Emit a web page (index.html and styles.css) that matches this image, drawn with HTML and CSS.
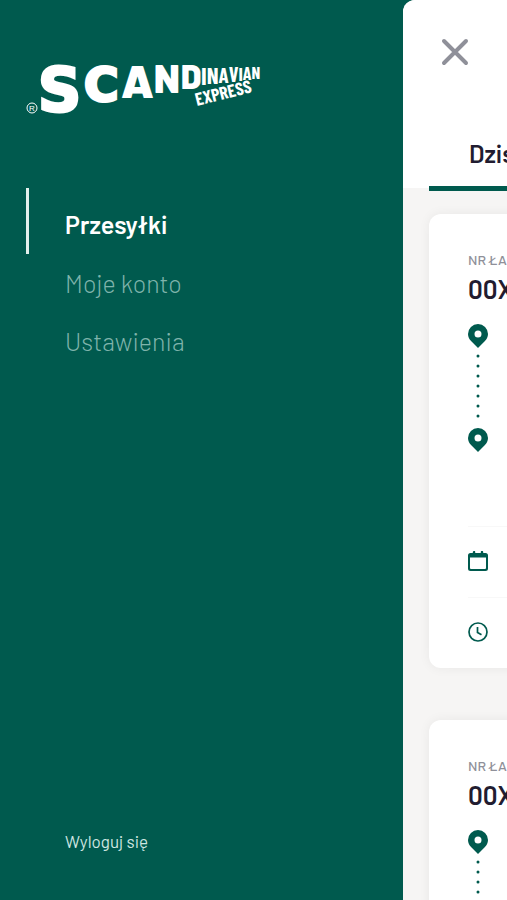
FILE: index.html
```html
<!DOCTYPE html>
<html lang="pl">
<head>
    <meta charset="UTF-8">
    <meta name="viewport" content="width=device-width, initial-scale=1.0">
    <title>Scandinavian Express</title>
    <link rel="stylesheet" href="styles.css">
</head>
<body>
    <!-- Shared icons -->
    <svg class="sprite" aria-hidden="true">
        <symbol id="pin" viewBox="0 0 20 24">
            <path fill-rule="evenodd" d="M10 0a10 10 0 0 1 10 10c0 3-1.300 5.300-3.300 7.300L10 24l-6.700-6.700C1.300 15.300 0 13 0 10A10 10 0 0 1 10 0zm0 6.500a3.500 3.500 0 1 0 0 7 3.500 3.500 0 0 0 0-7z"/>
        </symbol>
        <symbol id="calendar" viewBox="0 0 20 20">
            <path fill-rule="evenodd" d="M6 0a1 1 0 0 1 1.200 1v1h5.600V1a1.200 1.200 0 0 1 2.400 0v1h2.300A2.500 2.500 0 0 1 20 4.500v13a2.500 2.500 0 0 1-2.500 2.500h-15A2.500 2.500 0 0 1 0 17.500v-13A2.500 2.500 0 0 1 2.500 2h2.300V1A1.200 1.200 0 0 1 6 0zM2 6.500V17a1 1 0 0 0 1 1h14a1 1 0 0 0 1-1V6.500z"/>
        </symbol>
        <symbol id="clock" viewBox="0 0 20 20">
            <g fill="none" stroke="currentColor" stroke-width="1.700">
                <circle cx="10" cy="10" r="9"/>
                <path d="M9.500 5v5.500l4 2.300"/>
            </g>
        </symbol>
    </svg>

    <div class="app">
        <aside class="menu">
            <svg class="logo" viewBox="0 0 232 52" role="img" aria-label="Scandinavian Express">
                <text class="logo-wide" x="12" y="47" font-size="60">S</text>
                <text class="logo-wide" x="58" y="37" font-size="47">C</text>
                <text class="logo-black" x="95" y="34" font-size="46">A</text>
                <text class="logo-black" x="128" y="29" font-size="39">N</text>
                <text class="logo-black" x="155" y="25" font-size="33">D</text>
                <text class="logo-narrow" x="175" y="21">
                    <tspan font-size="25">I</tspan><tspan dy="-1" font-size="23">N</tspan><tspan dy="-1" font-size="21">A</tspan><tspan dy="-1" font-size="20">V</tspan><tspan dy="-1" font-size="19">I</tspan><tspan dy="-1" font-size="18">A</tspan><tspan dy="-1" font-size="17">N</tspan>
                </text>
                <text class="logo-narrow" font-size="18" transform="translate(171 42) rotate(-14)">EXPRESS</text>
                <circle cx="6" cy="44" r="5" fill="none" stroke="#fff"/>
                <text class="logo-mark" x="6" y="47" font-size="8" text-anchor="middle">R</text>
            </svg>

            <nav class="menu-nav">
                <a class="menu-link active" href="#">Przesyłki</a>
                <a class="menu-link" href="#">Moje konto</a>
                <a class="menu-link" href="#">Ustawienia</a>
            </nav>

            <a class="logout" href="#">Wyloguj się</a>
        </aside>

        <main class="panel">
            <header class="panel-header">
                <button class="close" type="button" aria-label="Zamknij">
                    <svg viewBox="0 0 28 28"><path d="M3 3l22 22M25 3L3 25"/></svg>
                </button>
                <div class="tabs">
                    <a class="tab" href="#">Dzisiaj</a>
                </div>
            </header>

            <div class="cards">
                <article class="card">
                    <div class="label">NR ŁADUNKU</div>
                    <h2 class="number">00XX</h2>
                    <div class="route">
                        <svg class="pin"><use href="#pin"/></svg>
                        <svg class="dots" viewBox="0 0 20 64"><path d="M10 2V63"/></svg>
                        <svg class="pin"><use href="#pin"/></svg>
                    </div>
                    <div class="row"><svg class="icon"><use href="#calendar"/></svg></div>
                    <div class="row"><svg class="icon"><use href="#clock"/></svg></div>
                </article>

                <article class="card">
                    <div class="label">NR ŁADUNKU</div>
                    <h2 class="number">00XX</h2>
                    <div class="route">
                        <svg class="pin"><use href="#pin"/></svg>
                        <svg class="dots" viewBox="0 0 20 64"><path d="M10 2V63"/></svg>
                        <svg class="pin"><use href="#pin"/></svg>
                    </div>
                    <div class="row"><svg class="icon"><use href="#calendar"/></svg></div>
                    <div class="row"><svg class="icon"><use href="#clock"/></svg></div>
                </article>
            </div>
        </main>
    </div>
</body>
</html>
```
FILE: styles.css
```css
* {
    box-sizing: border-box;
}
body {
    margin: 0;
    background-color: #005a4e;
    font-family: Barlow, Roboto, sans-serif;
    color: #211c30;
}
a {
    text-decoration: none;
}
svg {
    display: block;
}
.sprite {
    display: none;
}
.app {
    display: flex;
    height: 100vh;
    overflow: hidden;
}

/* Side menu */
.menu {
    flex: 1;
    display: flex;
    flex-direction: column;
    padding: 64px 26px 46px;
}
.logo {
    width: 232px;
    height: 52px;
    fill: #fff;
    overflow: visible;
}
.logo-wide {
    font-family: "DejaVu Sans", sans-serif;
    font-weight: 700;
    stroke: #fff;
    stroke-width: 3;
}
.logo-black {
    font-family: Barlow, Roboto, sans-serif;
    font-weight: 900;
}
.logo-narrow {
    font-family: "Barlow Condensed", "Liberation Sans Narrow", Roboto, sans-serif;
    font-weight: 700;
}
.logo-mark {
    font-family: "Liberation Sans", sans-serif;
}
.menu-nav {
    display: flex;
    flex-direction: column;
    margin-top: 72px;
}
.menu-link {
    padding-left: 39px;
    font-size: 25px;
    font-weight: 300;
    line-height: 58px;
    color: #7fb3ab;
}
.menu-link.active {
    padding: 6px 0 0 36px;
    border-left: 3px solid #e3f0ed;
    font-weight: 600;
    line-height: 60px;
    color: #fff;
}
.logout {
    margin-top: auto;
    padding-left: 39px;
    font-size: 17px;
    line-height: 26px;
    color: #cfe6e1;
}

/* Shipment panel, pushed aside by the menu */
.panel {
    flex: 0 0 104px;
    overflow: hidden;
    border-top-left-radius: 12px;
    background-color: #f6f5f4;
}
.panel-header {
    height: 188px;
    padding: 38px 0 0 26px;
    background-color: #fff;
}
.close {
    display: block;
    margin-left: 12px;
    padding: 0;
    border: none;
    background: none;
    cursor: pointer;
}
.close svg {
    width: 28px;
    height: 28px;
    fill: none;
    stroke: #8f9099;
    stroke-width: 4;
    stroke-linecap: round;
}
.tabs {
    display: flex;
    padding-top: 56px;
}
.tab {
    flex: none;
    padding: 0 40px 2px;
    border-bottom: 5px solid #005a4e;
    font-size: 25px;
    font-weight: 600;
    line-height: 62px;
    color: #211c30;
}
.cards {
    display: flex;
    flex-direction: column;
    gap: 52px;
    padding: 26px 0 26px 26px;
}
.card {
    width: 320px;
    padding: 38px 39px 0;
    border-radius: 12px;
    background-color: #fff;
    box-shadow: 0 0 12px rgba(0, 0, 0, 0.06);
}
.label {
    font-size: 14px;
    font-weight: 500;
    line-height: 16px;
    color: #8f9099;
}
.number {
    margin: 0;
    font-size: 26px;
    font-weight: 600;
    line-height: 42px;
}
.route {
    height: 216px;
    padding-top: 14px;
}
.pin {
    width: 20px;
    height: 24px;
    fill: #005a4e;
}
.dots {
    width: 20px;
    height: 64px;
    margin: 6px 0 10px;
    fill: none;
    stroke: #005a4e;
    stroke-width: 3;
    stroke-linecap: round;
    stroke-dasharray: 0 10;
}
.row {
    display: flex;
    align-items: center;
    height: 71px;
    padding-bottom: 2px;
    border-top: 1px solid #f8f8f8;
}
.icon {
    width: 20px;
    height: 20px;
    fill: #005a4e;
    color: #005a4e;
}
```
